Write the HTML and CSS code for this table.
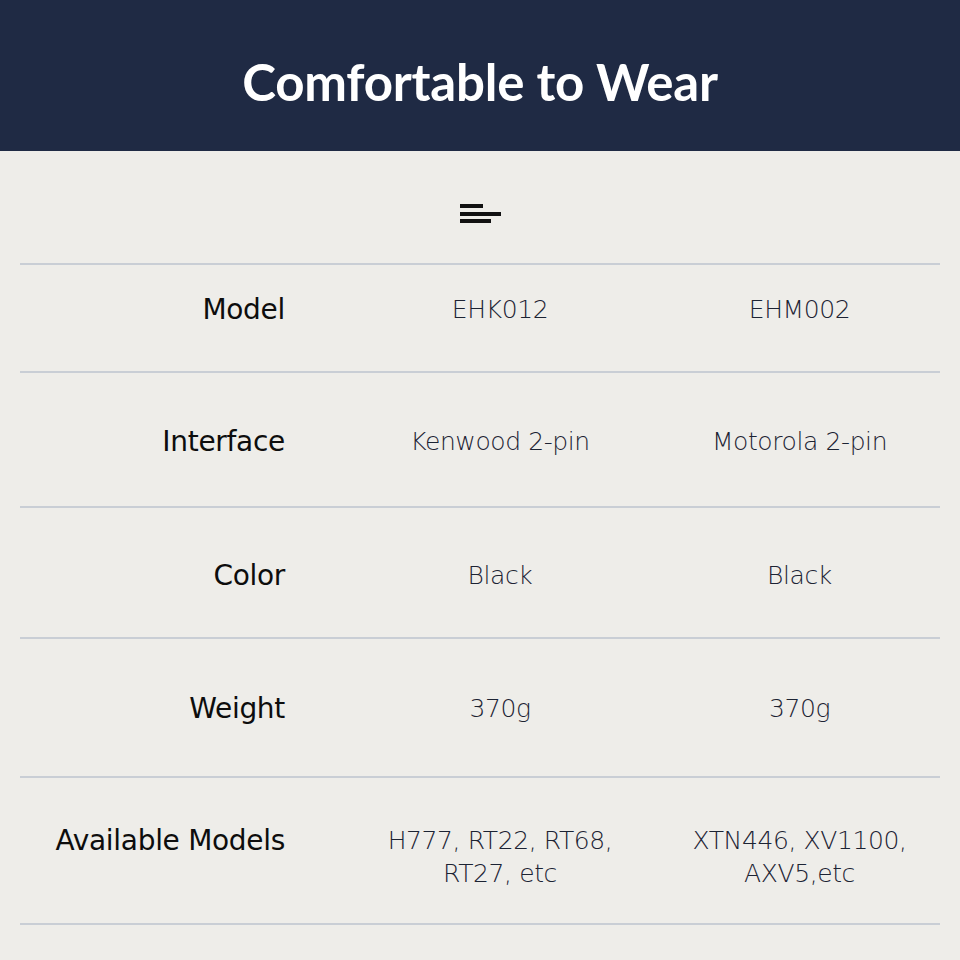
FILE: index.html
```html
<!DOCTYPE html>
<html>
<head>
<meta charset="utf-8">
<link rel="stylesheet" href="styles.css">
</head>
<body>
<header class="banner">
  <h1 class="title">Comfortable to Wear</h1>
</header>
<main class="content">
  <div class="icon-row">
    <svg class="menu-icon" width="42" height="22" viewBox="0 0 42 22">
      <rect x="0" y="0" width="23" height="4" fill="#111"/>
      <rect x="0" y="8" width="41" height="4" fill="#111"/>
      <rect x="0" y="15" width="31" height="4" fill="#111"/>
    </svg>
  </div>
  <div class="table">
    <div class="row row-model">
      <div class="label">Model</div>
      <div class="val">EHK012</div>
      <div class="val val2">EHM002</div>
    </div>
    <div class="row row-interface">
      <div class="label">Interface</div>
      <div class="val">Kenwood 2-pin</div>
      <div class="val val2">Motorola 2-pin</div>
    </div>
    <div class="row row-color">
      <div class="label">Color</div>
      <div class="val">Black</div>
      <div class="val val2">Black</div>
    </div>
    <div class="row row-weight">
      <div class="label">Weight</div>
      <div class="val">370g</div>
      <div class="val val2">370g</div>
    </div>
    <div class="row row-models">
      <div class="label">Available Models</div>
      <div class="val">H777, RT22, RT68,<br>RT27, etc</div>
      <div class="val val2">XTN446, XV1100,<br>AXV5,etc</div>
    </div>
  </div>
</main>
</body>
</html>
```
FILE: styles.css
```css
* { box-sizing: border-box; }
html, body { margin: 0; padding: 0; }
body {
  width: 960px;
  height: 960px;
  background: #eeede9;
  font-family: "DejaVu Sans", "Liberation Sans", sans-serif;
  overflow: hidden;
}
.banner {
  height: 151px;
  background: #1f2a44;
  display: flex;
  align-items: center;
  justify-content: center;
}
.title {
  margin: 0;
  padding-top: 12px;
  color: #ffffff;
  font-family: "Lato", sans-serif;
  font-weight: 700;
  font-size: 51px;
  letter-spacing: -0.2px;
}
.content {
  padding: 0 20px;
}
.icon-row {
  height: 112px;
  display: flex;
  justify-content: center;
  padding-top: 53px;
}
.menu-icon { display: block; margin-left: 1px; }
.table {
  border-top: 2px solid #c9ced5;
}
.row {
  display: grid;
  grid-template-columns: 331px 298px 291px;
  border-bottom: 2px solid #c9ced5;
  align-items: center;
}
.label {
  text-align: right;
  padding-right: 66px;
  font-family: "DejaVu Sans", sans-serif;
  font-size: 28px;
  color: #0d0d0d;
  font-weight: 400;
  letter-spacing: -0.3px;
}
.val {
  text-align: center;
  font-family: "DejaVu Sans", sans-serif;
  font-size: 25px;
  color: #1c2333;
  font-weight: 200;
  line-height: 33px;
  letter-spacing: -0.4px;
}
.val2 { padding-left: 10px; }
.row-model { height: 108px; padding-bottom: 18px; }
.row-interface { height: 135px; padding-top: 4px; }
.row-color { height: 131px; padding-top: 6px; }
.row-weight { height: 139px; padding-top: 2px; }
.row-models { height: 147px; align-items: start; padding-top: 46px; }
.row-models .label { line-height: 33px; }
```
